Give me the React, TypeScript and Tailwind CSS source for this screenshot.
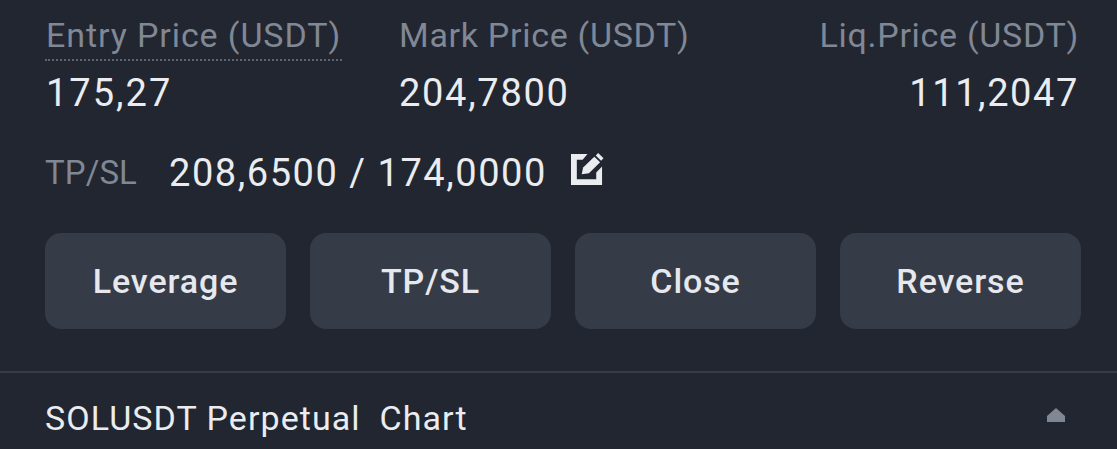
import React from 'react';

const buttons = ['Leverage', 'TP/SL', 'Close', 'Reverse'];

const App: React.FC = () => {
  return (
    <div className="w-[1117px] h-[449px] overflow-hidden bg-[#212630] font-['Roboto',sans-serif]">
      <div className="pl-[45px] pr-[36px] pt-[14px]">
        <div className="flex justify-between">
          <div className="w-[354px]">
            <div className="w-[297px] h-[47px] border-b-2 border-dotted border-[#5e6673] text-[34px] leading-[42px] tracking-[0.9px] text-[#808795] pl-[1px] whitespace-nowrap">
              Entry Price (USDT)
            </div>
            <div className="mt-[9px] pl-[1px] text-[38px] leading-[46px] tracking-[2px] text-[#eaecef]">175,27</div>
          </div>
          <div className="flex-1">
            <div className="h-[47px] text-[34px] leading-[42px] tracking-[0.7px] text-[#808795] whitespace-nowrap">Mark Price (USDT)</div>
            <div className="mt-[9px] text-[38px] leading-[46px] tracking-[1.7px] text-[#eaecef]">204,7800</div>
          </div>
          <div className="text-right mr-[2px]">
            <div className="h-[47px] text-[34px] leading-[42px] tracking-[0.7px] text-[#808795] whitespace-nowrap">Liq.Price (USDT)</div>
            <div className="mt-[9px] text-[38px] leading-[46px] tracking-[1.6px] text-[#eaecef]">111,2047</div>
          </div>
        </div>

        <div className="mt-[34px] flex items-center h-[46px]">
          <span className="text-[33px] tracking-[0.1px] text-[#808795]">TP/SL</span>
          <span className="ml-[32px] text-[38px] tracking-[1.55px] text-[#eaecef]">208,6500 / 174,0000</span>
          <svg className="ml-[24px] mb-[9px]" width="33" height="33" viewBox="0 0 34 34" fill="#eaecef">
            <path d="M0 2h17l-5 6H6v20h20v-7l6-6v19H0z" />
            <path d="M11 23l1.500-7L24 5l6 5.500L18.500 22z" />
            <path d="M25.500 3.500l2.500-2.500 5.500 5.500-2.500 2.500z" />
          </svg>
        </div>

        <div className="mt-[37px] grid grid-cols-4 gap-[24px]">
          {buttons.map((label) => (
            <button
              key={label}
              className="h-[96px] rounded-[16px] bg-[#353b47] text-[34px] font-medium tracking-[0.9px] text-[#e6e8ed]"
            >
              {label}
            </button>
          ))}
        </div>
      </div>

      <div className="mt-[42px] border-t-2 border-[#353b47] pl-[45px] pr-[52px] h-[80px] flex items-start justify-between">
        <span className="mt-[24px] text-[34px] leading-[42px] tracking-[1.05px] text-[#eaecef] whitespace-pre">SOLUSDT Perpetual  Chart</span>
        <svg className="mt-[35px]" width="18" height="14" viewBox="0 0 18 14" fill="#7f8694">
          <path d="M9 0l9 8v6H0V8z" />
        </svg>
      </div>
    </div>
  );
};

export default App;
